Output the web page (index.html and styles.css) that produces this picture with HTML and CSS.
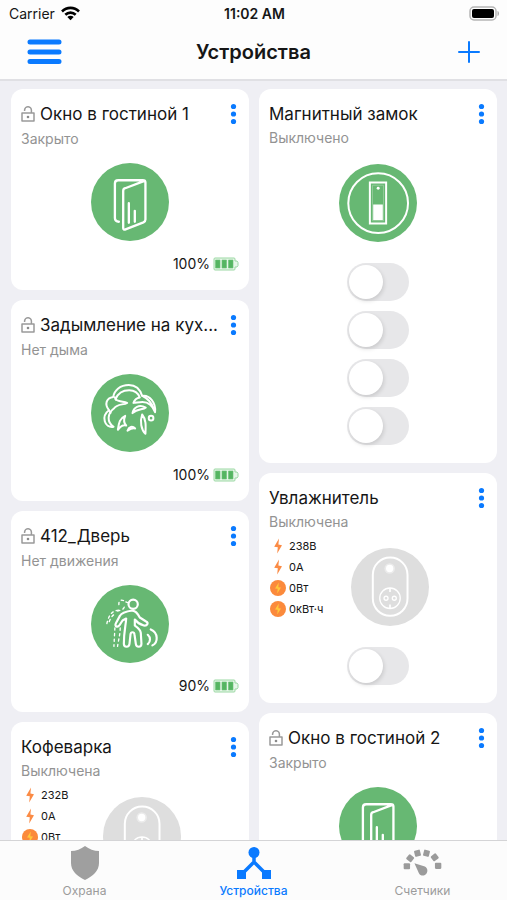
FILE: index.html
```html
<!DOCTYPE html>
<html lang="ru">
<head>
<meta charset="utf-8">
<meta name="viewport" content="width=device-width, initial-scale=1">
<title>Устройства</title>
<link rel="stylesheet" href="styles.css">
</head>
<body>
<svg class="sprite" aria-hidden="true">
  <symbol id="lock" viewBox="0 0 14 16">
    <path d="M1 7h12v8H1zM10.400 7V4.500a3.400 3.400 0 0 0-6.800-.6V5" fill="none" stroke="#9a9a9a" stroke-width="1.500" stroke-linejoin="round"/>
    <circle cx="7" cy="11" r="1.300" fill="#8a8a8a"/>
  </symbol>
  <symbol id="dots" viewBox="0 0 12 24">
    <g fill="#0a7aff"><circle cx="6.500" cy="4.500" r="2.600"/><circle cx="6.500" cy="12" r="2.600"/><circle cx="6.500" cy="19.500" r="2.600"/></g>
  </symbol>
  <symbol id="battery" viewBox="0 0 26 14">
    <path d="M2 1h19a1 1 0 0 1 1 1v2h2l1 1.500v3L24 10h-2v2a1 1 0 0 1-1 1H2a1 1 0 0 1-1-1V2a1 1 0 0 1 1-1z" fill="#e6f6e8" stroke="#9bd8a3"/>
    <path d="M2.500 3H7v8H2.500zM9 3h4.500v8H9zM15.500 3H20v8h-4.500z" fill="#55b562" stroke="#6cc277" stroke-width=".6"/>
  </symbol>
  <symbol id="bolt" viewBox="0 0 18 18">
    <path d="M10 1.500 5.200 9.800l3.600.4L8.200 16.500 13 8.200l-3.600-.6z" fill="#fb8b45"/>
  </symbol>
  <symbol id="bolt-round" viewBox="0 0 18 18">
    <circle cx="9" cy="9" r="8" fill="#fb8a3c"/>
    <path d="M9.800 3.500 6 9.500l2.700.3-.5 4.700L12 8.600l-2.700-.4z" fill="#ffc83a"/>
  </symbol>
  <symbol id="door" viewBox="273 235 235 235">
    <circle cx="390.500" cy="352.500" r="117.500" fill="#67b873"/>
    <g fill="none" stroke="#fff" stroke-width="7" stroke-linecap="round" stroke-linejoin="round">
      <path d="M357 412c-8 0-12-4-12-11V297c0-6 4-10 10-10h74c5 0 8 2 8 7v111c0 4-2 7-6 9l-54 21c-4 2-7 0-7-4V319c0-4 2-7 6-8l58-22"/>
      <path d="M387 356v59M405 379v33"/>
    </g>
  </symbol>
  <symbol id="magnet" viewBox="255 237 235 235">
    <circle cx="372.500" cy="354.500" r="117.500" fill="#67b873"/>
    <g fill="none" stroke="#fff" stroke-width="6">
      <circle cx="373" cy="355" r="90"/>
      <path d="M348 293h49v123h-49z"/>
      <path d="M356 301h33v107h-33z" stroke-width="2" stroke="#a5d5ab"/>
    </g>
    <path d="M358 359h29v47h-29z" fill="#fff"/><circle cx="373" cy="310" r="4.500" fill="#fff"/>
  </symbol>
  <symbol id="smoke" viewBox="273 237 235 235">
    <circle cx="390.500" cy="354.500" r="117.500" fill="#67b873"/>
    <g fill="none" stroke="#fff" stroke-width="6" stroke-linecap="round" stroke-linejoin="round">
      <path d="M340 306c3-20 21-36 47-36 21 0 34 13 40 33 22-4 42 20 39 49-7-20-19-31-38-31-10 0-17 2-27 3 3-9 9-14 19-16-5-14-16-22-32-22-20 0-34 9-41 27 7 7 22 7 35 11-12 7-30 2-40 17-20 15-22 41-1 55-28 5-38-32-14-50-14-18-8-37 13-40z"/>
      <path d="M430 304c16 8 25 19 31 36M345 307l3 7M327 346l5 8"/>
      <path d="M398 355c3-18 20-27 40-17-8 8-25 2-40 17zM427 359c13 16 11 35 10 58-13-12-17-37-10-58zM354 405c3-18 4-34 22-42-5 12-6 20 3 29-12-2-17 3-25 13zM383 408c4-13 15-16 23-7-9-2-14 1-23 7z"/>
      <circle cx="454" cy="370" r="7"/>
    </g>
  </symbol>
  <symbol id="motion" viewBox="18 15 235 235">
    <circle cx="135.500" cy="132.500" r="117.500" fill="#67b873"/>
    <g fill="none" stroke="#fff" stroke-width="6.500" stroke-linecap="round" stroke-linejoin="round">
      <circle cx="145" cy="73" r="14"/>
      <path d="M143 92c-20 3-34 8-38 16l-12 22c-5 10 5 14 11 6l9-14 11-6c-1 20-7 38-7 76 0 12 16 12 17 0l3-28c1-9 11-9 12 0l4 28c1 12 17 12 17 0l-2-33c-1-10-11-17-18-22v-18c9 12 20 16 27 18 11 2 15-8 7-12l-19-12c-6-12-12-20-22-21z"/>
      <path d="M189 165c9 8 9 20 0 28M198 149c23 10 23 39 5 48"/>
      <path d="M128 68l-5-2M116 62c-9-4-15 2-14 12M118 82c-4 10-14 9-22 12M101 91c-24 2-31 20-37 48M86 105c-10 8-11 18-15 24M90 144l-3 56M106 144c0 20-5 34-8 56" stroke-width="4" stroke-dasharray="7 10"/>
    </g>
  </symbol>
  <symbol id="socket" viewBox="291 232 236 236">
    <circle cx="409" cy="350" r="118" fill="#dedede"/>
    <g fill="none" stroke="#fff" stroke-width="6">
      <rect x="357" y="261" width="105" height="176" rx="52"/>
      <circle cx="409" cy="384" r="31" stroke-width="4"/>
      <circle cx="397" cy="384" r="6" stroke-width="4"/><circle cx="422" cy="384" r="6" stroke-width="4"/>
      <path d="M409 353v12M409 403v12" stroke-width="5"/>
    </g>
    <circle cx="408" cy="294" r="16" fill="#fff" opacity=".4"/><circle cx="408" cy="294" r="11" fill="#fff"/>
  </symbol>
</svg>

<div class="app">
  <header class="top">
    <div class="status-bar">
      <span class="carrier">Carrier
        <svg width="19" height="15" viewBox="0 0 19 15" aria-hidden="true"><g fill="none" stroke="#000" stroke-width="2.600"><path d="M1 5.500C5.800.7 13.200.7 18 5.500M4.300 8.800c3-2.900 7.400-2.900 10.400 0"/></g><path d="M6.300 10.900c1.900-1.700 4.500-1.700 6.400 0L9.500 14.200z"/></svg>
      </span>
      <span class="clock">11:02 AM</span>
      <svg class="power" width="31" height="15" viewBox="0 0 31 15" aria-hidden="true"><rect x="1" y="1" width="26" height="13" rx="4" fill="#fff" stroke="#b5b5b5" stroke-width="1.500"/><rect x="3" y="3" width="22" height="9" rx="2"/><path d="M28.500 5v5c2-.5 2-4.500 0-5z" fill="#aaa"/></svg>
    </div>
    <div class="nav-bar">
      <button class="icon-button" aria-label="Меню"><svg width="35" height="26" viewBox="0 0 35 26"><path d="M3 3h29M3 13h29M3 22.500h29" stroke="#0a7aff" stroke-width="5" stroke-linecap="round"/></svg></button>
      <h1>Устройства</h1>
      <button class="icon-button" aria-label="Добавить"><svg width="22" height="22" viewBox="0 0 22 22"><path d="M11 1v20M1 11h20" stroke="#0a7aff" stroke-width="2" stroke-linecap="round"/></svg></button>
    </div>
  </header>

  <main class="board">
    <div class="column">
      <article class="card locked">
        <div class="card-head"><svg class="lock"><use href="#lock"/></svg><h2>Окно в гостиной 1</h2><button class="more" aria-label="Ещё"><svg><use href="#dots"/></svg></button></div>
        <p class="state">Закрыто</p>
        <svg class="device"><use href="#door"/></svg>
        <p class="charge">100%<svg><use href="#battery"/></svg></p>
      </article>
      <article class="card locked">
        <div class="card-head"><svg class="lock"><use href="#lock"/></svg><h2>Задымление на кух...</h2><button class="more" aria-label="Ещё"><svg><use href="#dots"/></svg></button></div>
        <p class="state">Нет дыма</p>
        <svg class="device"><use href="#smoke"/></svg>
        <p class="charge">100%<svg><use href="#battery"/></svg></p>
      </article>
      <article class="card locked">
        <div class="card-head"><svg class="lock"><use href="#lock"/></svg><h2>412_Дверь</h2><button class="more" aria-label="Ещё"><svg><use href="#dots"/></svg></button></div>
        <p class="state">Нет движения</p>
        <svg class="device"><use href="#motion"/></svg>
        <p class="charge">90%<svg><use href="#battery"/></svg></p>
      </article>
      <article class="card">
        <div class="card-head"><h2>Кофеварка</h2><button class="more" aria-label="Ещё"><svg><use href="#dots"/></svg></button></div>
        <p class="state">Выключена</p>
        <div class="meter">
          <ul>
            <li><svg><use href="#bolt"/></svg>232В</li>
            <li><svg><use href="#bolt"/></svg>0А</li>
            <li><svg><use href="#bolt-round"/></svg>0Вт</li>
          </ul>
          <svg class="device"><use href="#socket"/></svg>
        </div>
      </article>
    </div>
    <div class="column">
      <article class="card">
        <div class="card-head"><h2>Магнитный замок</h2><button class="more" aria-label="Ещё"><svg><use href="#dots"/></svg></button></div>
        <p class="state">Выключено</p>
        <svg class="device"><use href="#magnet"/></svg>
        <div class="switches">
          <input type="checkbox" role="switch" aria-label="Канал 1">
          <input type="checkbox" role="switch" aria-label="Канал 2">
          <input type="checkbox" role="switch" aria-label="Канал 3">
          <input type="checkbox" role="switch" aria-label="Канал 4">
        </div>
      </article>
      <article class="card">
        <div class="card-head"><h2>Увлажнитель</h2><button class="more" aria-label="Ещё"><svg><use href="#dots"/></svg></button></div>
        <p class="state">Выключена</p>
        <div class="meter">
          <ul>
            <li><svg><use href="#bolt"/></svg>238В</li>
            <li><svg><use href="#bolt"/></svg>0А</li>
            <li><svg><use href="#bolt-round"/></svg>0Вт</li>
            <li><svg><use href="#bolt-round"/></svg>0кВт·ч</li>
          </ul>
          <svg class="device"><use href="#socket"/></svg>
        </div>
        <div class="switches"><input type="checkbox" role="switch" aria-label="Увлажнитель"></div>
      </article>
      <article class="card locked">
        <div class="card-head"><svg class="lock"><use href="#lock"/></svg><h2>Окно в гостиной 2</h2><button class="more" aria-label="Ещё"><svg><use href="#dots"/></svg></button></div>
        <p class="state">Закрыто</p>
        <svg class="device"><use href="#door"/></svg>
      </article>
    </div>
  </main>

  <nav class="tabs">
    <a href="#security"><svg width="30" height="34" viewBox="0 0 30 34"><path d="M15 0c4 3 9 5 14 5v12c0 8-6 13-14 17C7 30 1 25 1 17V5c5 0 10-2 14-5z" fill="#9f9f9f"/></svg>Охрана</a>
    <a href="#devices" class="current" aria-current="page"><svg width="34" height="34" viewBox="0 0 34 34"><g fill="#0a7aff"><circle cx="17" cy="6.500" r="5.500"/><path d="M0 24h9v9H0zM25 24h9v9h-9z"/></g><path d="M17 8v10M5 28l12-12 12 12" fill="none" stroke="#0a7aff" stroke-width="3.500"/></svg>Устройства</a>
    <a href="#meters"><svg width="39" height="34" viewBox="447 409 116 101"><g fill="#9b9b9b"><rect x="449" y="460" width="19" height="18" rx="3"/><rect x="459" y="436" width="19" height="18" rx="3" transform="rotate(38 468 445)"/><rect x="481" y="421" width="18" height="19" rx="3" transform="rotate(-14 490 430)"/><rect x="508" y="421" width="18" height="19" rx="3" transform="rotate(14 517 430)"/><rect x="532" y="434" width="19" height="18" rx="3" transform="rotate(-38 541 443)"/><rect x="542" y="459" width="19" height="18" rx="3"/><path d="M481 460l31 10c10 5 9 18 3 23-6 6-17 5-21-4z"/></g></svg>Счетчики</a>
  </nav>
</div>
</body>
</html>
```

FILE: styles.css
```css
* { box-sizing: border-box; }

body {
  margin: 0;
  font-family: Inter, "Liberation Sans", sans-serif;
  color: #161616;
  background: #efeff4;
}

h1, h2, p, ul { margin: 0; padding: 0; font-weight: 400; }
ul { list-style: none; }
button { padding: 0; border: 0; background: none; }
svg { display: block; flex: none; }
.sprite { position: absolute; width: 0; height: 0; }

.app {
  display: flex;
  flex-direction: column;
  height: 100vh;
}

.top {
  flex: none;
  padding-bottom: 2px;
  background: #fdfdfd;
  border-bottom: 2px solid #e0e0e4;
}

.status-bar {
  display: grid;
  grid-template-columns: 1fr auto 1fr;
  align-items: center;
  height: 27px;
  padding: 0 7px 0 9px;
  font-size: 14px;
}

.carrier { display: flex; align-items: center; gap: 6px; }
.clock { font-weight: 600; }
.power { justify-self: end; }

.nav-bar {
  display: grid;
  grid-template-columns: 1fr auto 1fr;
  align-items: center;
  height: 50px;
  padding: 0 27px;
}

.nav-bar h1 { font-size: 20px; font-weight: 600; }
.icon-button:last-child { justify-self: end; }
.icon-button:first-child { justify-self: start; }

.board {
  flex: 1;
  min-height: 0;
  display: grid;
  grid-template-columns: repeat(2, minmax(0, 1fr));
  align-items: start;
  gap: 10px;
  padding: 8px 10px 0 11px;
  overflow: hidden;
}

.column {
  display: grid;
  grid-template-columns: minmax(0, 1fr);
  gap: 10px;
}

.card {
  padding: 13px 10px 18px;
  border-radius: 12px;
  background: #fff;
}

.card.locked { padding-bottom: 16px; }

.card-head {
  display: flex;
  align-items: center;
  gap: 5px;
  height: 24px;
}

.card-head h2 {
  flex: 1;
  overflow: hidden;
  font-size: 17px;
  line-height: 24px;
  white-space: nowrap;
  text-overflow: ellipsis;
}

.lock { width: 14px; height: 16px; }
.more svg { width: 12px; height: 24px; }

.state {
  margin-top: 2px;
  color: #939393;
  font-size: 14px;
  line-height: 20px;
}

.locked .state { margin-top: 3px; }

.device {
  width: 78px;
  height: 78px;
  margin: 16px auto 0;
}

.locked .device { margin-top: 14px; }

.charge {
  display: flex;
  align-items: center;
  justify-content: flex-end;
  gap: 3px;
  margin-top: 13px;
  font-size: 14px;
  line-height: 20px;
}

.charge svg { width: 26px; height: 14px; }

.meter { display: flex; align-items: flex-start; }
.meter ul { width: 82px; padding-top: 3px; }
.meter .device { margin-left: 0; }

.meter li {
  display: flex;
  align-items: center;
  gap: 2px;
  height: 21px;
  font-size: 11px;
}

.meter li svg { width: 18px; height: 18px; }

.switches {
  display: grid;
  justify-items: center;
  gap: 10px;
  margin-top: 21px;
}

.switches input {
  appearance: none;
  display: flex;
  width: 62px;
  height: 38px;
  margin: 0;
  padding: 2px;
  border-radius: 19px;
  background: #e7e7e9;
}

.switches input::before {
  content: "";
  width: 34px;
  height: 34px;
  border-radius: 50%;
  background: #fff;
  box-shadow: 1px 2px 4px #0002;
}

.switches input:checked { justify-content: flex-end; background: #67b873; }

.tabs {
  flex: none;
  display: grid;
  grid-template-columns: repeat(3, 1fr);
  height: 60px;
  padding-top: 5px;
  border-top: 1px solid #d4d4d6;
  background: #fcfcfc;
}

.tabs a {
  display: flex;
  flex-direction: column;
  align-items: center;
  gap: 3px;
  color: #9b9b9b;
  font-size: 12px;
  line-height: 16px;
  text-decoration: none;
}

.tabs .current { color: #0a7aff; font-weight: 500; }
```
